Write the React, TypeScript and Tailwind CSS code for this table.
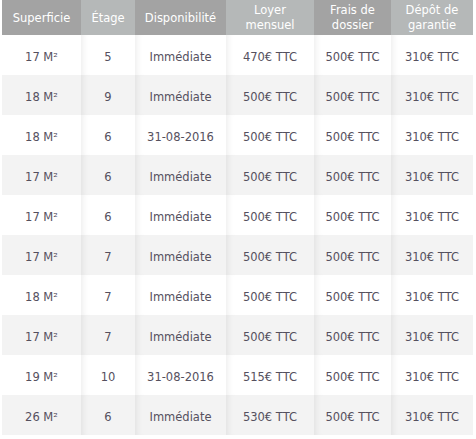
const rows = [
  ['17 M²', '5', 'Immédiate', '470€ TTC', '500€ TTC', '310€ TTC'],
  ['18 M²', '9', 'Immédiate', '500€ TTC', '500€ TTC', '310€ TTC'],
  ['18 M²', '6', '31-08-2016', '500€ TTC', '500€ TTC', '310€ TTC'],
  ['17 M²', '6', 'Immédiate', '500€ TTC', '500€ TTC', '310€ TTC'],
  ['17 M²', '6', 'Immédiate', '500€ TTC', '500€ TTC', '310€ TTC'],
  ['17 M²', '7', 'Immédiate', '500€ TTC', '500€ TTC', '310€ TTC'],
  ['18 M²', '7', 'Immédiate', '500€ TTC', '500€ TTC', '310€ TTC'],
  ['17 M²', '7', 'Immédiate', '500€ TTC', '500€ TTC', '310€ TTC'],
  ['19 M²', '10', '31-08-2016', '515€ TTC', '500€ TTC', '310€ TTC'],
  ['26 M²', '6', 'Immédiate', '530€ TTC', '500€ TTC', '310€ TTC'],
];

const headers = [
  ['Superficie'],
  ['Étage'],
  ['Disponibilité'],
  ['Loyer', 'mensuel'],
  ['Frais de', 'dossier'],
  ['Dépôt de', 'garantie'],
];

const widths = ['w-[79px]', 'w-[54px]', 'w-[91px]', 'w-[88px]', 'w-[77px]', 'w-[82px]'];

export default function App() {
  return (
    <div className="w-[476px] h-[439px] bg-white pl-[2px] font-['DejaVu_Sans',sans-serif]">
      <table className="border-collapse table-fixed w-[471px]">
        <thead>
          <tr>
            {headers.map((h, i) => (
              <th
                key={i}
                className={`${widths[i]} h-[35px] p-0 pt-[1px] text-center align-middle font-normal text-[11.5px] leading-[15px] text-white ${
                  i % 2 === 0 ? 'bg-[#a3a3a3]' : 'bg-[#b5b8b8]'
                }`}
              >
                {h.map((line, j) => (
                  <div key={j}>{line}</div>
                ))}
              </th>
            ))}
          </tr>
        </thead>
        <tbody>
          {rows.map((r, ri) => (
            <tr key={ri} className={ri % 2 === 0 ? 'bg-white' : 'bg-[#f3f3f3]'}>
              {r.map((cell, ci) => (
                <td
                  key={ci}
                  className={`h-[40px] p-0 pt-[4px] text-center align-middle text-[11.5px] leading-[14px] text-[#55505e] ${
                    ci > 0 ? 'shadow-[inset_7px_0_6px_-5px_rgba(0,0,0,0.07)]' : ''
                  }`}
                >
                  {cell}
                </td>
              ))}
            </tr>
          ))}
        </tbody>
      </table>
    </div>
  );
}
